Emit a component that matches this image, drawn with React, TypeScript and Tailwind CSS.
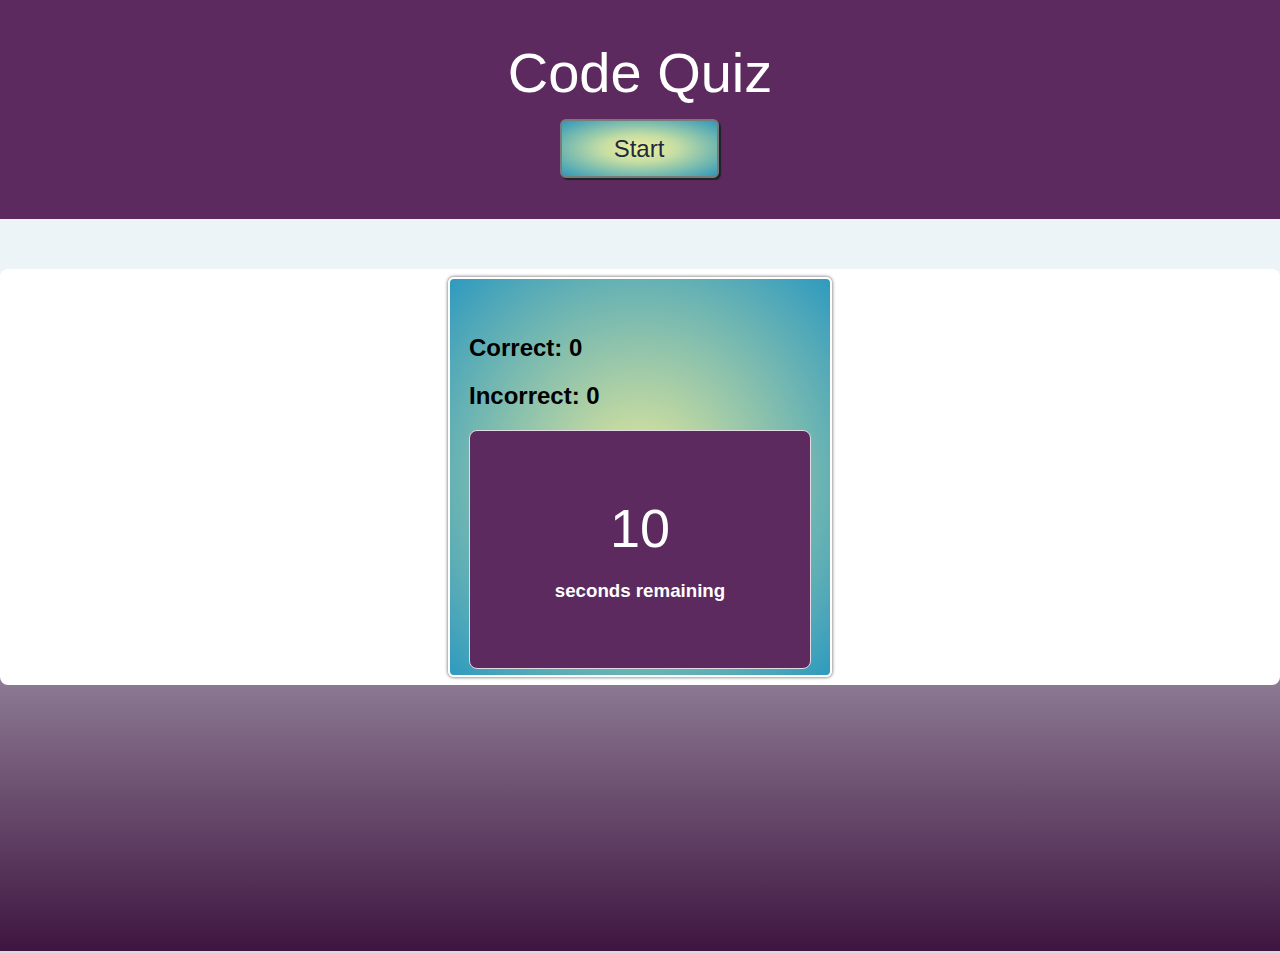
export default function App() {
  return (
    <div className="min-h-[953px] flex flex-col font-['Liberation_Sans',Arial,sans-serif]">
      {/* Header */}
      <header className="h-[219px] bg-[#5c2a5e] flex flex-col items-center pt-[41px]">
        <h1 className="text-[56px] leading-[64px] text-white">Code Quiz</h1>
        <button className="mt-[14px] -ml-[2px] w-[159px] h-[59px] rounded-md border-2 border-[#7a7a7a] bg-[radial-gradient(ellipse_at_center,#f4ee9a_0%,#c4dda4_35%,#74b9b0_70%,#3198ba_100%)] shadow-[2px_2px_1px_#182626] text-[24px] text-[#1c2a44]">
          Start
        </button>
      </header>

      <div className="h-[50px] bg-[#ecf4f7]" />

      {/* Main panel */}
      <div className="bg-[linear-gradient(to_bottom,#ecf4f7_50%,#8b7891_50%)]">
        <main className="bg-white rounded-lg py-2 flex justify-center">
          <section className="w-[384px] h-[400px] rounded-md border-2 border-white shadow-[0_0_3px_1px_#9a9a9a] bg-[radial-gradient(ellipse_at_center,#e6e89a_0%,#2f9abf_100%)] px-[19px] pt-[55px] pb-[6px] flex flex-col">
            <h2 className="text-[24px] leading-[28px] font-bold text-black">Correct: 0</h2>
            <h2 className="mt-5 text-[24px] leading-[28px] font-bold text-black">Incorrect: 0</h2>
            <div className="mt-5 flex-1 rounded-lg border border-[#e2dbe3] bg-[#5c2a5e] flex flex-col items-center pt-[66px]">
              <p className="text-[54px] leading-[62px] text-white">10</p>
              <p className="mt-[21px] text-[18.72px] leading-[22px] font-bold text-white">seconds remaining</p>
            </div>
          </section>
        </main>
      </div>

      <div className="flex-1 bg-[linear-gradient(to_bottom,#8b7891,#3e1540)]" />
      <div className="h-[2px] bg-[#dcd8dc]" />
    </div>
  );
}
